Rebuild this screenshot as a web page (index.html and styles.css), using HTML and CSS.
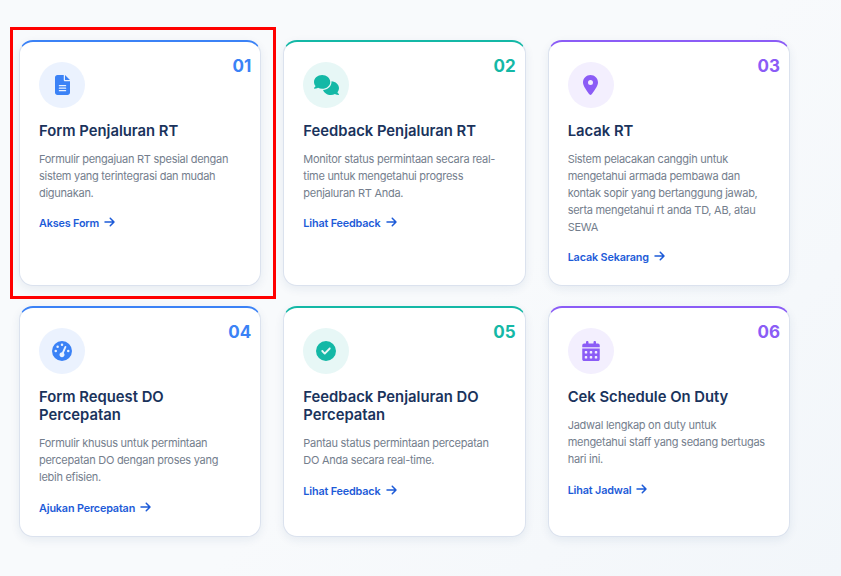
FILE: index.html
```html
<!DOCTYPE html>
<html lang="id">
<head>
<meta charset="utf-8">
<title>Layanan</title>
<link rel="stylesheet" href="styles.css">
</head>
<body>
<main class="grid">
  <article class="card blue">
    <span class="num">01</span>
    <div class="icon"><svg width="15" height="20" viewBox="0 0 384 512"><path d="M64 0C28.7 0 0 28.7 0 64V448c0 35.3 28.7 64 64 64H320c35.3 0 64-28.7 64-64V160H256c-17.7 0-32-14.3-32-32V0H64zM256 0V128H384L256 0zM112 256H272c8.8 0 16 7.2 16 16s-7.2 16-16 16H112c-8.8 0-16-7.2-16-16s7.2-16 16-16zm0 64H272c8.8 0 16 7.2 16 16s-7.2 16-16 16H112c-8.8 0-16-7.2-16-16s7.2-16 16-16zm0 64H272c8.8 0 16 7.2 16 16s-7.2 16-16 16H112c-8.8 0-16-7.2-16-16s7.2-16 16-16z"/></svg></div>
    <h3>Form Penjaluran RT</h3>
    <p>Formulir pengajuan RT spesial dengan sistem yang terintegrasi dan mudah digunakan.</p>
    <a class="link" href="#">Akses Form <svg class="arrow" width="11" height="12" viewBox="0 0 448 512"><path d="M438.6 278.6c12.5-12.5 12.5-32.8 0-45.3l-160-160c-12.5-12.5-32.8-12.5-45.3 0s-12.5 32.8 0 45.3L338.8 224 32 224c-17.7 0-32 14.3-32 32s14.3 32 32 32l306.7 0L233.4 393.4c-12.5 12.5-12.5 32.8 0 45.3s32.8 12.5 45.3 0l160-160z"/></svg></a>
  </article>
  <article class="card teal">
    <span class="num">02</span>
    <div class="icon"><svg width="25" height="20" viewBox="0 0 640 512"><path d="M208 352c114.9 0 208-78.8 208-176S322.9 0 208 0S0 78.8 0 176c0 38.6 14.7 74.3 39.6 103.4c-3.5 9.4-8.7 17.7-14.2 24.7c-4.8 6.2-9.7 11-13.3 14.3c-1.8 1.6-3.3 2.9-4.3 3.7c-.5 .4-.9 .7-1.1 .8l-.2 .2 0 0 0 0C1 327.2-1.4 334.4 .8 340.9S9.1 352 16 352c21.8 0 43.8-5.6 62.1-12.5c9.2-3.5 17.8-7.4 25.3-11.4C134.1 343.3 169.8 352 208 352zM448 176c0 112.3-99.1 196.9-216.5 207C255.8 457.4 336.4 512 432 512c38.2 0 73.9-8.7 104.7-23.9c7.5 4 16 7.9 25.2 11.4c18.3 6.9 40.3 12.5 62.1 12.5c6.9 0 13.1-4.5 15.2-11.1c2.1-6.6-.2-13.8-5.8-17.9l0 0 0 0-.2-.2c-.2-.2-.6-.4-1.1-.8c-1-.8-2.5-2-4.3-3.7c-3.6-3.3-8.5-8.1-13.3-14.3c-5.5-7-10.7-15.4-14.2-24.7c24.9-29 39.6-64.7 39.6-103.4c0-92.8-84.9-168.9-192.6-175.5c.4 5.1 .6 10.3 .6 15.5z"/></svg></div>
    <h3>Feedback Penjaluran RT</h3>
    <p>Monitor status permintaan secara real-time untuk mengetahui progress penjaluran RT Anda.</p>
    <a class="link" href="#">Lihat Feedback <svg class="arrow" width="11" height="12" viewBox="0 0 448 512"><path d="M438.6 278.6c12.5-12.5 12.5-32.8 0-45.3l-160-160c-12.5-12.5-32.8-12.5-45.3 0s-12.5 32.8 0 45.3L338.8 224 32 224c-17.7 0-32 14.3-32 32s14.3 32 32 32l306.7 0L233.4 393.4c-12.5 12.5-12.5 32.8 0 45.3s32.8 12.5 45.3 0l160-160z"/></svg></a>
  </article>
  <article class="card purple">
    <span class="num">03</span>
    <div class="icon"><svg width="15" height="20" viewBox="0 0 384 512"><path d="M215.7 499.2C267 435 384 279.4 384 192C384 86 298 0 192 0S0 86 0 192c0 87.4 117 243 168.3 307.2c12.3 15.3 35.1 15.3 47.4 0zM192 128a64 64 0 1 1 0 128 64 64 0 1 1 0-128z"/></svg></div>
    <h3>Lacak RT</h3>
    <p>Sistem pelacakan canggih untuk mengetahui armada pembawa dan kontak sopir yang bertanggung jawab, serta mengetahui rt anda TD, AB, atau SEWA</p>
    <a class="link" href="#">Lacak Sekarang <svg class="arrow" width="11" height="12" viewBox="0 0 448 512"><path d="M438.6 278.6c12.5-12.5 12.5-32.8 0-45.3l-160-160c-12.5-12.5-32.8-12.5-45.3 0s-12.5 32.8 0 45.3L338.8 224 32 224c-17.7 0-32 14.3-32 32s14.3 32 32 32l306.7 0L233.4 393.4c-12.5 12.5-12.5 32.8 0 45.3s32.8 12.5 45.3 0l160-160z"/></svg></a>
  </article>
  <article class="card blue">
    <span class="num">04</span>
    <div class="icon"><svg width="20" height="20" viewBox="0 0 512 512"><path d="M0 256a256 256 0 1 1 512 0A256 256 0 1 1 0 256zM288 96a32 32 0 1 0 -64 0 32 32 0 1 0 64 0zM256 416c35.3 0 64-28.7 64-64c0-17.4-6.9-33.1-18.1-44.6L366 161.7c5.3-12.1-.2-26.3-12.3-31.6s-26.3 .2-31.6 12.3L257.9 288c-.6 0-1.3 0-1.9 0c-35.3 0-64 28.7-64 64s28.7 64 64 64zM176 144a32 32 0 1 0 -64 0 32 32 0 1 0 64 0zM96 288a32 32 0 1 0 0-64 32 32 0 1 0 0 64zm352-32a32 32 0 1 0 -64 0 32 32 0 1 0 64 0z"/></svg></div>
    <h3>Form Request DO Percepatan</h3>
    <p>Formulir khusus untuk permintaan percepatan DO dengan proses yang lebih efisien.</p>
    <a class="link" href="#">Ajukan Percepatan <svg class="arrow" width="11" height="12" viewBox="0 0 448 512"><path d="M438.6 278.6c12.5-12.5 12.5-32.8 0-45.3l-160-160c-12.5-12.5-32.8-12.5-45.3 0s-12.5 32.8 0 45.3L338.8 224 32 224c-17.7 0-32 14.3-32 32s14.3 32 32 32l306.7 0L233.4 393.4c-12.5 12.5-12.5 32.8 0 45.3s32.8 12.5 45.3 0l160-160z"/></svg></a>
  </article>
  <article class="card teal">
    <span class="num">05</span>
    <div class="icon"><svg width="20" height="20" viewBox="0 0 512 512"><path d="M256 512A256 256 0 1 0 256 0a256 256 0 1 0 0 512zM369 209L241 337c-9.4 9.4-24.6 9.4-33.9 0l-64-64c-9.4-9.4-9.4-24.6 0-33.9s24.6-9.4 33.9 0l47 47L335 175c9.4-9.4 24.6-9.4 33.9 0s9.4 24.6 0 33.9z"/></svg></div>
    <h3>Feedback Penjaluran DO Percepatan</h3>
    <p>Pantau status permintaan percepatan DO Anda secara real-time.</p>
    <a class="link" href="#">Lihat Feedback <svg class="arrow" width="11" height="12" viewBox="0 0 448 512"><path d="M438.6 278.6c12.5-12.5 12.5-32.8 0-45.3l-160-160c-12.5-12.5-32.8-12.5-45.3 0s-12.5 32.8 0 45.3L338.8 224 32 224c-17.7 0-32 14.3-32 32s14.3 32 32 32l306.7 0L233.4 393.4c-12.5 12.5-12.5 32.8 0 45.3s32.8 12.5 45.3 0l160-160z"/></svg></a>
  </article>
  <article class="card purple">
    <span class="num">06</span>
    <div class="icon"><svg width="18" height="20" viewBox="0 0 448 512"><path d="M128 0c17.7 0 32 14.3 32 32V64H288V32c0-17.7 14.3-32 32-32s32 14.3 32 32V64h48c26.5 0 48 21.5 48 48v48H0V112C0 85.5 21.5 64 48 64H96V32c0-17.7 14.3-32 32-32zM0 192H448V464c0 26.5-21.5 48-48 48H48c-26.5 0-48-21.5-48-48V192zm64 80v32c0 8.8 7.2 16 16 16h32c8.8 0 16-7.2 16-16V272c0-8.8-7.2-16-16-16H80c-8.8 0-16 7.2-16 16zm128 0v32c0 8.8 7.2 16 16 16h32c8.8 0 16-7.2 16-16V272c0-8.8-7.2-16-16-16H208c-8.8 0-16 7.2-16 16zm144-16c-8.8 0-16 7.2-16 16v32c0 8.8 7.2 16 16 16h32c8.8 0 16-7.2 16-16V272c0-8.8-7.2-16-16-16H336zM64 400v32c0 8.8 7.2 16 16 16h32c8.8 0 16-7.2 16-16V400c0-8.8-7.2-16-16-16H80c-8.8 0-16 7.2-16 16zm144-16c-8.8 0-16 7.2-16 16v32c0 8.8 7.2 16 16 16h32c8.8 0 16-7.2 16-16V400c0-8.8-7.2-16-16-16H208zm112 16v32c0 8.8 7.2 16 16 16h32c8.8 0 16-7.2 16-16V400c0-8.8-7.2-16-16-16H336c-8.8 0-16 7.2-16 16z"/></svg></div>
    <h3>Cek Schedule On Duty</h3>
    <p>Jadwal lengkap on duty untuk mengetahui staff yang sedang bertugas hari ini.</p>
    <a class="link" href="#">Lihat Jadwal <svg class="arrow" width="11" height="12" viewBox="0 0 448 512"><path d="M438.6 278.6c12.5-12.5 12.5-32.8 0-45.3l-160-160c-12.5-12.5-32.8-12.5-45.3 0s-12.5 32.8 0 45.3L338.8 224 32 224c-17.7 0-32 14.3-32 32s14.3 32 32 32l306.7 0L233.4 393.4c-12.5 12.5-12.5 32.8 0 45.3s32.8 12.5 45.3 0l160-160z"/></svg></a>
  </article>
  <div class="highlight"></div>
</main>
</body>
</html>
```
FILE: styles.css
```css
* { box-sizing: border-box; }
html, body { margin: 0; height: 100%; overflow: hidden; }
body {
  background: linear-gradient(135deg, #f8fafc 0%, #f8fafc 55%, #f2f6fa 100%);
  font-family: Inter, "Liberation Sans", sans-serif;
}
.grid {
  position: relative;
  display: grid;
  grid-template-columns: repeat(3, 1fr);
  gap: 20px 22px;
  width: 771px;
  margin: 40px 0 0 19px;
}
.card {
  position: relative;
  display: flex;
  flex-direction: column;
  align-items: flex-start;
  background: #fff;
  border: 1px solid #dbe2ee;
  border-top: 2px solid var(--accent);
  border-radius: 14px;
  padding: 20px 19px 19px;
  box-shadow: 0 3px 10px rgba(30, 58, 110, 0.08);
}
.blue { --accent: #3b82f6; --tint: #ebf2fe; }
.teal { --accent: #14b8a6; --tint: #e7f7f6; }
.purple { --accent: #8b5cf6; --tint: #f3effe; }
.num {
  position: absolute;
  top: 13px;
  right: 9px;
  font-size: 17px;
  line-height: 22px;
  font-weight: 700;
  color: var(--accent);
}
.icon {
  display: flex;
  align-items: center;
  justify-content: center;
  width: 46px;
  height: 46px;
  border-radius: 50%;
  background: var(--tint);
  margin-bottom: 14px;
}
.icon svg { fill: var(--accent); display: block; }
h3 {
  margin: 0 0 11px;
  font-size: 14.8px;
  line-height: 18px;
  font-weight: 600;
  color: #1a335c;
}
p {
  margin: 0 0 12px;
  font-size: 11px;
  line-height: 17px;
  letter-spacing: -0.27px;
  color: #747e8d;
}
.link {
  display: inline-flex;
  align-items: center;
  gap: 5px;
  height: 18px;
  font-size: 10.8px;
  font-weight: 600;
  letter-spacing: -0.15px;
  color: #1d5bd8;
  text-decoration: none;
}
.card:nth-child(n+4) p { margin-bottom: 13px; }
.arrow { fill: #1d5bd8; display: block; margin-top: -2px; }
.highlight {
  position: absolute;
  left: -9px;
  top: -13px;
  width: 266px;
  height: 272px;
  border: 3px solid #f00;
  pointer-events: none;
}
```
